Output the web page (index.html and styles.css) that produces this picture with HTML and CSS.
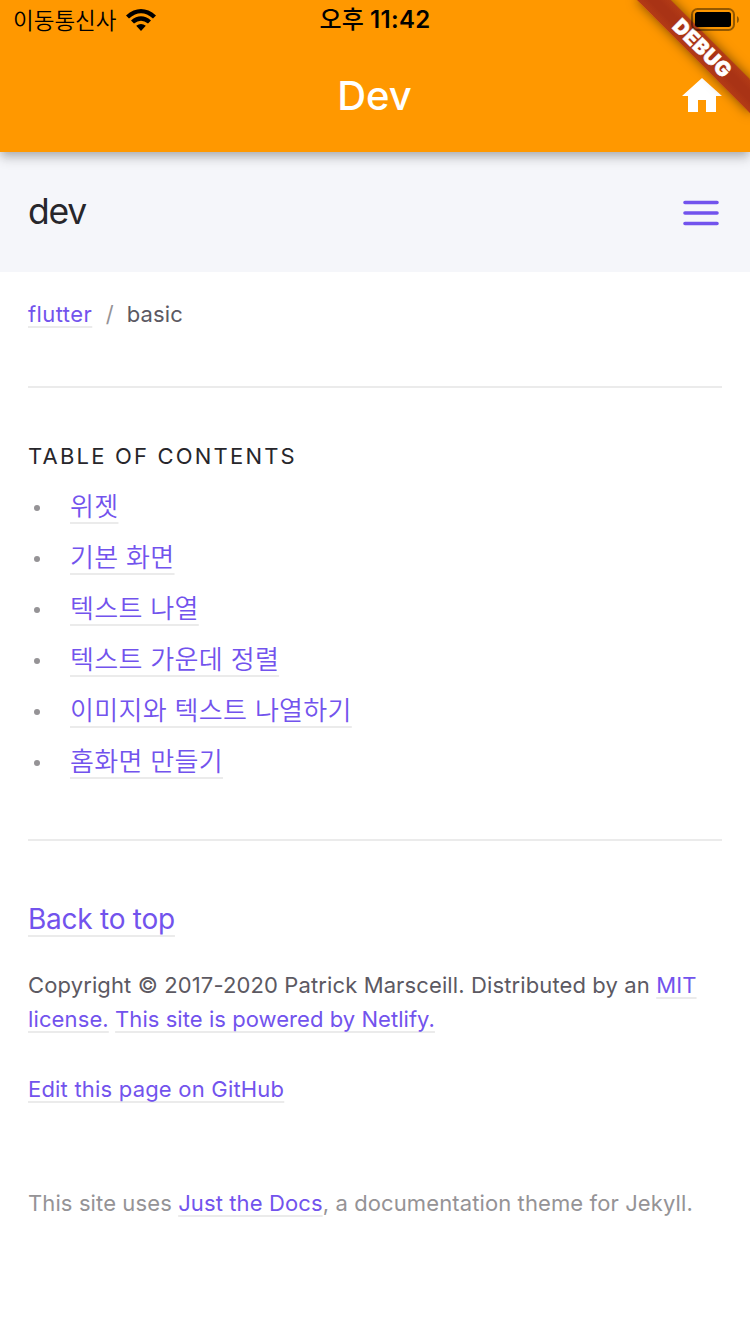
FILE: index.html
```html
<!DOCTYPE html>
<html lang="ko">
<head>
<meta charset="utf-8">
<title>Dev</title>
<link rel="stylesheet" href="styles.css">
</head>
<body>
<header class="top">
  <div class="status">
    <div class="carrier"><span>이동통신사</span>
      <svg class="wifi" width="30" height="22" viewBox="0 0 30 22"><path d="M0 6.4Q15-6.3 30 6.4L27 9.5Q15-.8 3 9.5ZM5 11.5Q15 3.2 25 11.5L22 14.6Q15 8.8 8 14.6ZM10.2 16.8Q15 13 19.8 16.8L15 22Z"/></svg>
    </div>
    <div class="time"><span class="ampm">오후</span> 11:42</div>
  </div>
  <div class="appbar"><h1 class="title">Dev</h1>
    <svg class="home" width="48" height="48" viewBox="0 0 24 24"><path fill="#fff" d="M10 20v-6h4v6h5v-8h3L12 3 2 12h3v8z"/></svg>
  </div>
</header>
<div class="ribbon-clip"><div class="ribbon">DEBUG</div></div>
<svg class="battery" width="50" height="24" viewBox="0 0 50 24"><rect x="2" y="1" width="42" height="21" rx="5.5" fill="none" stroke="#000" stroke-opacity=".42" stroke-width="2"/><rect x="5" y="4" width="36" height="15" rx="2.5"/><path d="M47 8q2 1.2 2 3.5T47 15z" fill-opacity=".42"/></svg>
<div class="site-header"><span class="site-title">dev</span>
  <svg width="36" height="26" viewBox="0 0 36 26"><path d="M2 2.5h32M2 13h32M2 23.5h32" stroke="#7253ed" stroke-width="3.6" stroke-linecap="round"/></svg>
</div>
<main class="content">
  <nav class="crumbs"><a class="link">flutter</a><span class="slash">/</span><span>basic</span></nav>
  <hr class="rule">
  <h2 class="toc-title">TABLE OF CONTENTS</h2>
  <ul class="toc">
    <li class="item"><a class="link">위젯</a></li>
    <li class="item"><a class="link">기본 화면</a></li>
    <li class="item"><a class="link">텍스트 나열</a></li>
    <li class="item"><a class="link">텍스트 가운데 정렬</a></li>
    <li class="item"><a class="link">이미지와 텍스트 나열하기</a></li>
    <li class="item"><a class="link">홈화면 만들기</a></li>
  </ul>
  <hr class="rule">
  <p class="back"><a class="link">Back to top</a></p>
  <p class="copy">Copyright © 2017-2020 Patrick Marsceill. Distributed by an <a class="link">MIT<br>license.</a> <a class="link powered">This site is powered by Netlify.</a></p>
  <p class="edit"><a class="link">Edit this page on GitHub</a></p>
  <footer class="foot">This site uses <a class="link">Just the Docs</a>, a documentation theme for Jekyll.</footer>
</main>
</body>
</html>
```
FILE: styles.css
```css
* { box-sizing: border-box; margin: 0; padding: 0; }
body {
  position: relative;
  width: 750px;
  height: 1334px;
  overflow: hidden;
  background: #fff;
  color: #5c5962;
  font: 400 22px/34px Inter, "Noto Sans CJK KR", sans-serif;
  letter-spacing: .12px;
}
.top {
  position: relative;
  height: 152px;
  background: #ff9800;
  box-shadow: 0 4px 8px -2px rgba(0,0,0,.2), 0 8px 10px rgba(0,0,0,.12), 0 2px 16px rgba(0,0,0,.04);
}
.status {
  display: grid;
  grid-template-columns: 1fr auto 1fr;
  height: 40px;
  padding: 0 13px;
  line-height: 40px;
  color: #000;
}
.carrier {
  display: flex;
  align-items: center;
  gap: 9px;
  height: 38px;
  font: 350 22.5px/34px "Noto Sans CJK KR", sans-serif;
  letter-spacing: 0;
}
.carrier span { margin-top: -1px; }
.wifi { margin-top: 2px; }
.time { height: 40px; font-size: 24px; font-weight: 600; letter-spacing: .3px; }
.ampm {
  display: inline-block;
  margin-top: -1px;
  font-family: "Noto Sans CJK KR", sans-serif;
  font-weight: 500;
  line-height: 38px;
  letter-spacing: 0;
}
.appbar {
  display: flex;
  align-items: center;
  justify-content: flex-end;
  height: 112px;
  padding: 0 24px 0 71px;
}
.title {
  flex: 1;
  text-align: center;
  color: #fff;
  font-size: 40px;
  font-weight: 500;
  letter-spacing: 0;
}
.ribbon-clip {
  position: absolute;
  top: 0;
  right: 0;
  width: 160px;
  height: 152px;
  overflow: hidden;
}
/* Corner ribbon, rotated around the top-right corner of the window. */
.ribbon {
  position: absolute;
  top: 56px;
  left: 80px;
  width: 160px;
  height: 24px;
  transform-origin: 80px -56px;
  transform: rotate(45deg);
  background: linear-gradient(#b43c16, #a93315 35%, #a93315 65%, #b43c16);
  box-shadow: 0 0 12px rgba(0,0,0,.5);
  color: #fff;
  font-size: 20.4px;
  font-weight: 900;
  letter-spacing: .5px;
  line-height: 24px;
  text-align: center;
  text-indent: 1px;
  -webkit-text-stroke: .5px #fff;
}
.battery { position: absolute; top: 8px; left: 690px; }
.site-header {
  display: flex;
  align-items: center;
  justify-content: space-between;
  height: 120px;
  padding: 2px 31px 0 28px;
  background: #f5f6fa;
}
.site-title {
  margin-top: -3px;
  color: #27262b;
  font-size: 35.5px;
  letter-spacing: -1.2px;
}
.content { padding: 25px 28px 0; }
.link {
  color: #7253ed;
  text-decoration: underline 2px #ebebeb;
  text-decoration-skip-ink: none;
  text-underline-offset: 4px;
}
.crumbs { display: flex; }
.crumbs .link { letter-spacing: .43px; }
.slash { margin: 0 13px 0 13.4px; color: #959396; }
.rule { height: 2px; border: 0; background: #ebebeb; }
.crumbs + .rule { margin: 55px 0 51px; }
.toc-title {
  color: #27262b;
  font-size: 22px;
  font-weight: 400;
  letter-spacing: 2.2px;
}
.toc { margin: 6px 0 54px; list-style: none; }
.item {
  display: flex;
  align-items: center;
  gap: 30px;
  height: 51px;
  padding-left: 6px;
  font: 350 26px/51px "Noto Sans CJK KR", sans-serif;
  letter-spacing: .3px;
  word-spacing: .1px;
}
.item::before {
  content: "";
  width: 6px;
  height: 6px;
  margin-top: 7px;
  border-radius: 50%;
  background: #959396;
}
.item .link, .back .link { text-underline-offset: 6px; }
.back { margin-top: 57px; font-size: 28px; line-height: 42px; letter-spacing: -.25px; }
.copy { margin-top: 28px; }
.powered { letter-spacing: .05px; }
.edit { margin-top: 36px; letter-spacing: .2px; }
.foot { margin-top: 80px; color: #959396; letter-spacing: .11px; }
```
